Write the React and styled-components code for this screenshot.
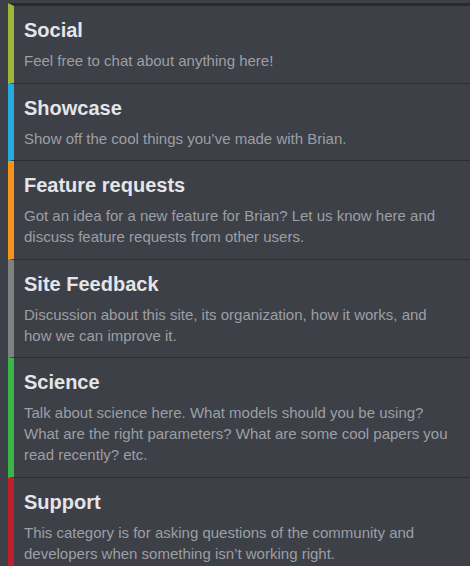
import React from "react";
import styled, { createGlobalStyle } from "styled-components";

const Global = createGlobalStyle`
  html, body { background: #3e4048; }
  body {
    margin: 0;
    padding: 3px 0 0 8px;
    font-family: "Liberation Sans", Arial, sans-serif;
  }
`;

const List = styled.div`
  display: flex;
  flex-direction: column;
`;

const Row = styled.div`
  border-left: 6px solid ${(p) => p.$color};
  border-top: ${(p) => (p.$first ? "3px solid #2a2b30" : "none")};
  border-bottom: 1px solid #2c2e33;
  padding: 12px 20px 11.5px 10px;
  display: flex;
  flex-direction: column;
  gap: 8px;
`;

const Title = styled.div`
  font-size: 20px;
  line-height: 24px;
  font-weight: 700;
  color: #e4e5e8;
`;

const Desc = styled.div`
  font-size: 15px;
  line-height: 21px;
  color: #9c9fa4;
`;

const cats = [
  { t: "Social", c: "#9eb83b", d: "Feel free to chat about anything here!" },
  { t: "Showcase", c: "#25aae1", d: "Show off the cool things you\u2019ve made with Brian." },
  { t: "Feature requests", c: "#f7941d", d: "Got an idea for a new feature for Brian? Let us know here and discuss feature requests from other users." },
  { t: "Site Feedback", c: "#808281", d: "Discussion about this site, its organization, how it works, and how we can improve it." },
  { t: "Science", c: "#3ab54a", d: "Talk about science here. What models should you be using? What are the right parameters? What are some cool papers you read recently? etc." },
  { t: "Support", c: "#bf1e2e", d: "This category is for asking questions of the community and developers when something isn\u2019t working right." },
];

export default function App() {
  return (
    <>
      <Global />
      <List>
        {cats.map((c, i) => (
          <Row key={c.t} $color={c.c} $first={i === 0}>
            <Title>{c.t}</Title>
            <Desc>{c.d}</Desc>
          </Row>
        ))}
      </List>
    </>
  );
}
